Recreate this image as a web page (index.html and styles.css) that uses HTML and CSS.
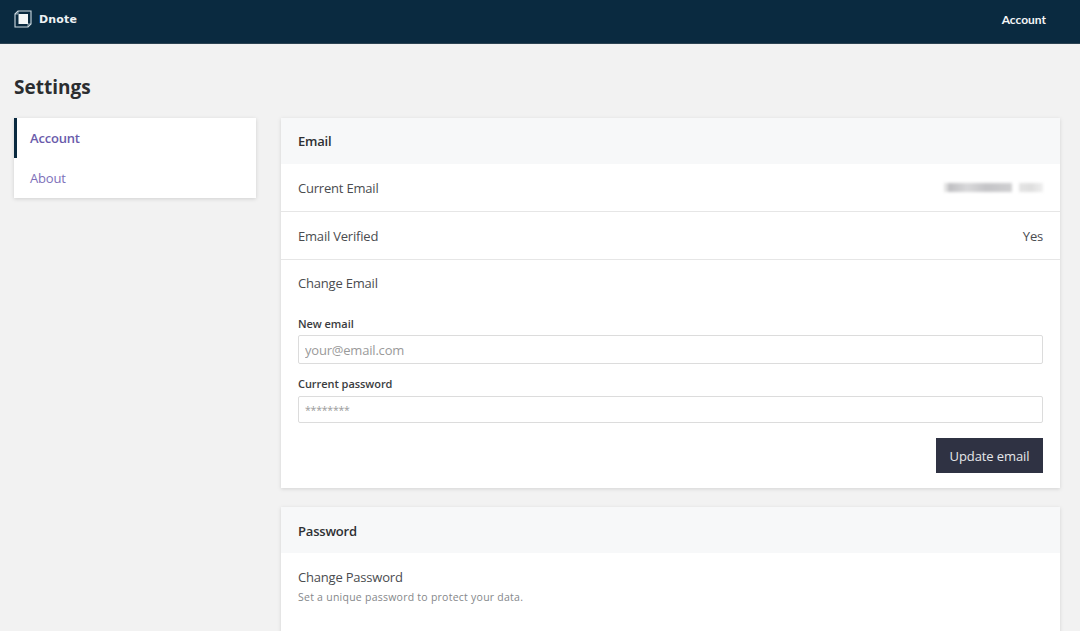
FILE: index.html
```html
<!DOCTYPE html>
<html lang="en">
<head>
<meta charset="utf-8">
<title>Dnote Settings</title>
<link rel="stylesheet" href="styles.css">
</head>
<body>
<header class="topbar">
  <a class="brand">
    <svg class="logo" width="18" height="18" viewBox="0 0 18 18" aria-hidden="true">
      <path d="M1 4 L4 1 H17 V14 L14 17 H1 Z" fill="none" stroke="#cfdbe2" stroke-width="1.1"/>
      <path d="M1 4 H4 V1 M17 14 H14 V17" fill="none" stroke="#cfdbe2" stroke-width="0.7"/>
      <rect x="4.5" y="4" width="9.5" height="10" fill="#f4f7f8"/>
    </svg>
    <span class="brand-name">Dnote</span>
  </a>
  <span class="topbar-link">Account</span>
</header>
<div class="page">
  <h1 class="title">Settings</h1>
  <div class="columns">
    <nav class="sidenav">
      <a class="nav-item active">Account</a>
      <a class="nav-item">About</a>
    </nav>
    <main class="content">
      <section class="card">
        <h2 class="card-head">Email</h2>
        <div class="row">
          <span>Current Email</span>
          <span class="redacted"><i class="r1"></i><i class="r2"></i><i class="r3"></i></span>
        </div>
        <div class="row">
          <span>Email Verified</span>
          <span>Yes</span>
        </div>
        <form class="change">
          <div class="change-title">Change Email</div>
          <label class="label" for="new-email">New email</label>
          <input class="input" id="new-email" type="text" placeholder="your@email.com">
          <label class="label label-second" for="cur-pass">Current password</label>
          <input class="input input-small" id="cur-pass" type="text" placeholder="********">
          <div class="actions"><button class="btn" type="button">Update email</button></div>
        </form>
      </section>
      <section class="card">
        <h2 class="card-head card-head-low">Password</h2>
        <div class="pass-row">
          <div class="pass-title">Change Password</div>
          <div class="pass-sub">Set a unique password to protect your data.</div>
        </div>
      </section>
    </main>
  </div>
</div>
</body>
</html>
```
FILE: styles.css
```css
* { box-sizing: border-box; }
html, body { height: 631px; overflow: hidden; }
body {
  margin: 0;
  background: #f2f2f2;
  color: #4a4c50;
  font-family: "Open Sans", "Noto Sans", sans-serif;
  font-size: 13px;
  letter-spacing: -0.2px;
}
.topbar {
  height: 44px;
  background: #0a2a40;
  border-bottom: 1px solid #2c4353;
  display: flex;
  align-items: center;
  justify-content: space-between;
  padding: 0 34px 5px 14px;
}
.brand { display: flex; align-items: center; gap: 7px; color: #eef2f4; }
.logo { display: block; }
.brand-name { font-family: "DejaVu Sans", sans-serif; font-size: 11px; font-weight: 700; letter-spacing: 0.2px; }
.topbar-link { font-family: "Lato", sans-serif; font-size: 12px; font-weight: 700; letter-spacing: 0; color: #f4f6f7; }
.page { padding: 0 20px 0 14px; }
.title {
  margin: 30px 0 18px;
  height: 26px;
  font-size: 19px;
  line-height: 26px;
  font-weight: 700;
  letter-spacing: 0;
  color: #2b2d30;
}
.columns { display: flex; gap: 25px; align-items: flex-start; }
.sidenav {
  width: 242px;
  flex: none;
  background: #fff;
  box-shadow: 0 1px 4px rgba(0,0,0,.14);
}
.nav-item {
  display: block;
  height: 40px;
  line-height: 40px;
  padding-left: 16px;
  color: #7d6fb9;
}
.nav-item.active {
  font-weight: 600;
  color: #6a5bab;
  border-left: 3px solid #0a2a40;
  padding-left: 13px;
}
.content { flex: 1; min-width: 0; }
.card {
  background: #fff;
  box-shadow: 0 1px 4px rgba(0,0,0,.13);
  margin-bottom: 19px;
}
.card-head {
  margin: 0;
  height: 46px;
  line-height: 46px;
  padding: 0 17px;
  background: #f7f8f9;
  font-size: 13px;
  font-weight: 600;
  color: #2e3033;
}
.card-head-low { line-height: 48px; }
.row {
  height: 48px;
  padding: 0 17px;
  display: flex;
  align-items: center;
  justify-content: space-between;
  border-bottom: 1px solid #e6e6e6;
}
.redacted { display: flex; align-items: center; filter: blur(1.6px); height: 12px; }
.redacted i { display: block; height: 9px; }
.r1 { width: 4px; background: #e2e2e2; }
.r2 { width: 64px; background: linear-gradient(90deg, #bdbdc0, #d8d8da 30%, #c4c4c7 60%, #cfcfd1); }
.r3 { width: 24px; margin-left: 7px; background: linear-gradient(90deg, #e4e4e4, #dedede 50%, #efefef); }
.change { padding: 0 17px 15px; }
.change-title { height: 47px; line-height: 47px; }
.label { display: block; margin-top: 9px; font-size: 11px; line-height: 16px; font-weight: 600; letter-spacing: -0.05px; color: #3a3c40; }
.label-second { margin-top: 12px; }
.input {
  display: block;
  width: 100%;
  height: 29px;
  margin-top: 3px;
  padding: 0 6px;
  border: 1px solid #dcdcdc;
  border-radius: 2px;
  background: #fff;
  font: inherit;
  letter-spacing: -0.2px;
  color: #333;
}
.input-small { height: 27px; margin-top: 4px; font-size: 10.5px; }
.input::placeholder { color: #9a9a9a; opacity: 1; }
.actions { display: flex; justify-content: flex-end; margin-top: 15px; }
.btn {
  width: 107px;
  height: 35px;
  padding: 0;
  border: 0;
  background: #2f3243;
  color: #e6e7ea;
  font: inherit;
  letter-spacing: -0.1px;
}
.pass-row { padding: 15px 17px 0; height: 100px; }
.pass-title { line-height: 19px; }
.pass-sub { font-size: 10.5px; line-height: 20px; color: #85878a; letter-spacing: 0.25px; }
```
